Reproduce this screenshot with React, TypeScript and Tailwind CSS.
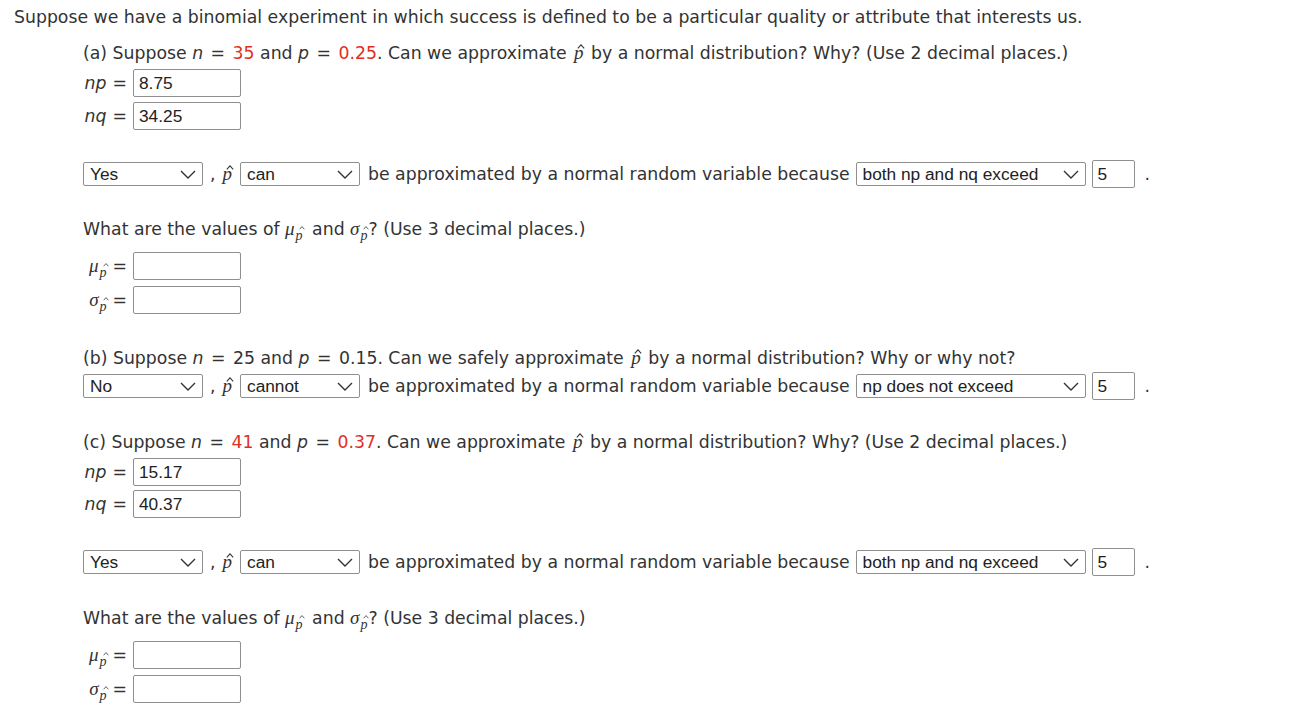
import React from 'react'

const SANS = "font-['DejaVu_Sans',Verdana,sans-serif]"
const ARIAL = "font-['Liberation_Sans',Arial,sans-serif]"
const SERIF = "font-['Liberation_Serif','Times_New_Roman',serif]"

function Hat({ w, cls }: { w: number; cls: string }) {
  return (
    <svg width={w} height={w * 0.6} viewBox="0 0 10 6" className={`absolute ${cls}`}>
      <path d="M1 5.5 L5 1 L9 5.5" fill="none" stroke="#333" strokeWidth="1.3" />
    </svg>
  )
}

function PHat({ small }: { small?: boolean }) {
  return (
    <span
      className={`relative inline-block italic ${SERIF} ${
        small ? 'text-[14px] leading-[14px]' : 'mx-[2px] text-[19px] leading-[20px]'
      }`}
    >
      p
      {small ? <Hat w={6} cls="left-[3px] -top-[3px]" /> : <Hat w={8} cls="left-[3px] top-[1px]" />}
    </span>
  )
}

function Sub({ sym, mr = '' }: { sym: string; mr?: string }) {
  return (
    <span className={`whitespace-nowrap ${mr}`}>
      <span className={`italic ${SERIF} text-[19px]`}>{sym}</span>
      <span className="relative top-[5px] ml-[1px]">
        <PHat small />
      </span>
    </span>
  )
}

function Eq() {
  return <span className="mx-[2px]">=</span>
}

function Red({ children }: { children: React.ReactNode }) {
  return <span className="text-[#e0301e]">{children}</span>
}

function Chevron() {
  return (
    <svg width="16" height="9" viewBox="0 0 16 9" fill="none" className="shrink-0">
      <path d="M1 1 L8 8 L15 1" stroke="#333" strokeWidth="1.4" />
    </svg>
  )
}

function Select({ value, width }: { value: string; width: string }) {
  return (
    <div
      className={`flex h-[24px] ${width} items-center justify-between rounded-[2px] border border-[#8f8f8f] bg-white pl-[6px] pr-[6px] ${ARIAL} text-[17.3px] text-[#222]`}
    >
      <span>{value}</span>
      <Chevron />
    </div>
  )
}

function Box({ value, width = 'w-[108px]' }: { value?: string; width?: string }) {
  return (
    <div
      className={`flex h-[28px] ${width} items-center rounded-[2px] border border-[#8f8f8f] bg-white pl-[5px] ${ARIAL} text-[17.3px] text-[#222]`}
    >
      {value}
    </div>
  )
}

function LabelRow({ label, value, mt }: { label: React.ReactNode; value?: string; mt: string }) {
  return (
    <div className={`flex items-center ${mt}`}>
      <div className="flex w-[50px] items-center justify-end gap-[6px] pr-[6px]">
        {label}
        <span>=</span>
      </div>
      <Box value={value} />
    </div>
  )
}

function ChoiceRow({ yn, can, reason, mt }: { yn: string; can: string; reason: string; mt: string }) {
  return (
    <div className={`flex h-[28px] items-center ${mt}`}>
      <Select value={yn} width="w-[120px]" />
      <span className="ml-[7px] mr-[6px] flex items-center gap-[5px]">
        ,<PHat />
      </span>
      <Select value={can} width="w-[120px]" />
      <span className="ml-[8px] mr-[6px] whitespace-nowrap">be approximated by a normal random variable because</span>
      <Select value={reason} width="w-[230px]" />
      <div className="ml-[6px]">
        <Box value="5" width="w-[43px]" />
      </div>
      <span className="ml-[10px]">.</span>
    </div>
  )
}

function ValuesQuestion({ mt }: { mt: string }) {
  return (
    <>
      <div className={`flex h-[20px] items-center ${mt}`}>
        <span className="whitespace-pre">What are the values of </span>
        <Sub sym="μ" mr="mr-[4px]" />
        <span className="whitespace-pre"> and </span>
        <Sub sym="σ" mr="mr-[1px]" />
        <span className="whitespace-pre">? (Use 3 decimal places.)</span>
      </div>
      <LabelRow label={<Sub sym="μ" />} mt="mt-[13px]" />
      <LabelRow label={<Sub sym="σ" />} mt="mt-[6px]" />
    </>
  )
}

export default function App() {
  return (
    <div className={`min-h-[720px] w-[1298px] bg-white px-[14px] pt-[7px] ${SANS} text-[17.3px] leading-[20px] text-[#333]`}>
      <div className="h-[20px] whitespace-nowrap">
        Suppose we have a binomial experiment in which success is defined to be a particular quality or attribute
        that interests us.
      </div>
      <div className="ml-[69px]">
        {/* (a) */}
        <div className="mt-[16px] h-[20px] whitespace-nowrap">
          (a) Suppose <i>n</i> <Eq /> <Red>35</Red> and <i>p</i> <Eq /> <Red>0.25</Red>. Can we approximate <PHat />{' '}
          by a normal distribution? Why? (Use 2 decimal places.)
        </div>
        <LabelRow label={<i>np</i>} value="8.75" mt="mt-[6px]" />
        <LabelRow label={<i>nq</i>} value="34.25" mt="mt-[5px]" />
        <ChoiceRow yn="Yes" can="can" reason="both np and nq exceed" mt="mt-[30px]" />
        <ValuesQuestion mt="mt-[31px]" />

        {/* (b) */}
        <div className="mt-[34px] h-[20px] whitespace-nowrap">
          (b) Suppose <i>n</i> <Eq /> 25 and <i>p</i> <Eq /> 0.15. Can we safely approximate <PHat /> by a normal
          distribution? Why or why not?
        </div>
        <ChoiceRow yn="No" can="cannot" reason="np does not exceed" mt="mt-[4px]" />

        {/* (c) */}
        <div className="mt-[32px] h-[20px] whitespace-nowrap">
          (c) Suppose <i>n</i> <Eq /> <Red>41</Red> and <i>p</i> <Eq /> <Red>0.37</Red>. Can we approximate <PHat />{' '}
          by a normal distribution? Why? (Use 2 decimal places.)
        </div>
        <LabelRow label={<i>np</i>} value="15.17" mt="mt-[6px]" />
        <LabelRow label={<i>nq</i>} value="40.37" mt="mt-[4px]" />
        <ChoiceRow yn="Yes" can="can" reason="both np and nq exceed" mt="mt-[30px]" />
        <ValuesQuestion mt="mt-[32px]" />
      </div>
    </div>
  )
}
